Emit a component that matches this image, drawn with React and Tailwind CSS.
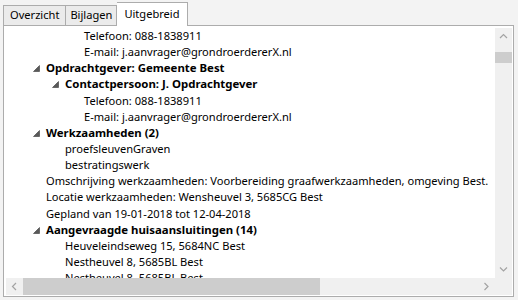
import React from 'react'

const rows = [
  { level: 3, text: 'Telefoon: 088-1838911' },
  { level: 3, text: 'E-mail: j.aanvrager@grondroerdererX.nl' },
  { level: 1, text: 'Opdrachtgever: Gemeente Best', bold: true, open: true },
  { level: 2, text: 'Contactpersoon: J. Opdrachtgever', bold: true, open: true },
  { level: 3, text: 'Telefoon: 088-1838911' },
  { level: 3, text: 'E-mail: j.aanvrager@grondroerdererX.nl' },
  { level: 1, text: 'Werkzaamheden (2)', bold: true, open: true },
  { level: 2, text: 'proefsleuvenGraven' },
  { level: 2, text: 'bestratingswerk' },
  { level: 1, text: 'Omschrijving werkzaamheden: Voorbereiding graafwerkzaamheden, omgeving Best.' },
  { level: 1, text: 'Locatie werkzaamheden: Wensheuvel 3, 5685CG Best' },
  { level: 1, text: 'Gepland van 19-01-2018 tot 12-04-2018' },
  { level: 1, text: 'Aangevraagde huisaansluitingen (14)', bold: true, open: true },
  { level: 2, text: 'Heuveleindseweg 15, 5684NC Best' },
  { level: 2, text: 'Nestheuvel 8, 5685BL Best' },
  { level: 2, text: 'Nestheuvel 8, 5685BL Best' },
]

const indent = { 1: 'pl-[27px]', 2: 'pl-[46px]', 3: 'pl-[65px]' }

function Expander() {
  return (
    <svg width="7" height="7" viewBox="0 0 7 7" className="mt-[5px]">
      <polygon points="6.5,0.5 6.5,6.5 0.5,6.5" fill="#595959" stroke="#3c3c3c" strokeWidth="0.6" />
    </svg>
  )
}

function Chevron({ dir }) {
  const d = {
    up: 'M1 5 L4.5 1.5 L8 5',
    down: 'M1 1.5 L4.5 5 L8 1.5',
    left: 'M5 1 L1.5 4.5 L5 8',
    right: 'M1.5 1 L5 4.5 L1.5 8',
  }[dir]
  const vertical = dir === 'up' || dir === 'down'
  return (
    <svg width={vertical ? 9 : 7} height={vertical ? 7 : 9} viewBox={vertical ? '0 0 9 7' : '0 0 7 9'}>
      <path d={d} fill="none" stroke="#a3a3a3" strokeWidth="1.2" />
    </svg>
  )
}

export default function App() {
  return (
    <div
      className="flex h-[300px] w-[518px] flex-col bg-[#f3f3f3] text-[11.1px] text-black"
      style={{ fontFamily: '"Noto Sans", "Open Sans", sans-serif' }}
    >
      <div className="flex items-end pl-[3px] pt-[2px]">
        <div className="h-[20px] border border-b-0 border-r-0 border-[#acacac] bg-[#ebebeb] px-[6px] leading-[18px]">
          Overzicht
        </div>
        <div className="h-[20px] border border-b-0 border-[#acacac] bg-[#ebebeb] px-[4px] leading-[18px]">
          Bijlagen
        </div>
        <div className="relative z-10 -mb-px h-[24px] border border-b-0 border-l-0 border-[#acacac] bg-white px-[7px] pt-[2px] leading-[18px]">
          Uitgebreid
        </div>
      </div>
      <div className="ml-[3px] flex h-[272px] w-[511px] border border-[#acacac] bg-white pb-px pl-[2px] pr-px pt-[2px]">
        <div className="grid flex-1 grid-cols-[1fr_17px] grid-rows-[1fr_17px]">
          <div className="overflow-hidden">
            {rows.map((r, i) => (
              <div key={i} className={`flex h-[16.15px] items-start whitespace-nowrap ${indent[r.level]}`}>
                <div className="w-[13px] shrink-0">{r.open && <Expander />}</div>
                <span className={`leading-4 ${r.bold ? 'text-[11.4px] font-bold' : ''}`}>{r.text}</span>
              </div>
            ))}
          </div>
          <div className="flex flex-col bg-[#f0f0f0]">
            <div className="flex h-[17px] items-center justify-center">
              <Chevron dir="up" />
            </div>
            <div className="mt-[7px] h-[11px] bg-[#cdcdcd]" />
            <div className="flex-1" />
            <div className="flex h-[17px] items-center justify-center">
              <Chevron dir="down" />
            </div>
          </div>
          <div className="flex bg-[#f0f0f0]">
            <div className="flex w-[17px] items-center justify-center">
              <Chevron dir="left" />
            </div>
            <div className="w-[297px] bg-[#cdcdcd]" />
            <div className="flex-1" />
            <div className="flex w-[17px] items-center justify-center">
              <Chevron dir="right" />
            </div>
          </div>
          <div className="bg-[#f0f0f0]" />
        </div>
      </div>
    </div>
  )
}
